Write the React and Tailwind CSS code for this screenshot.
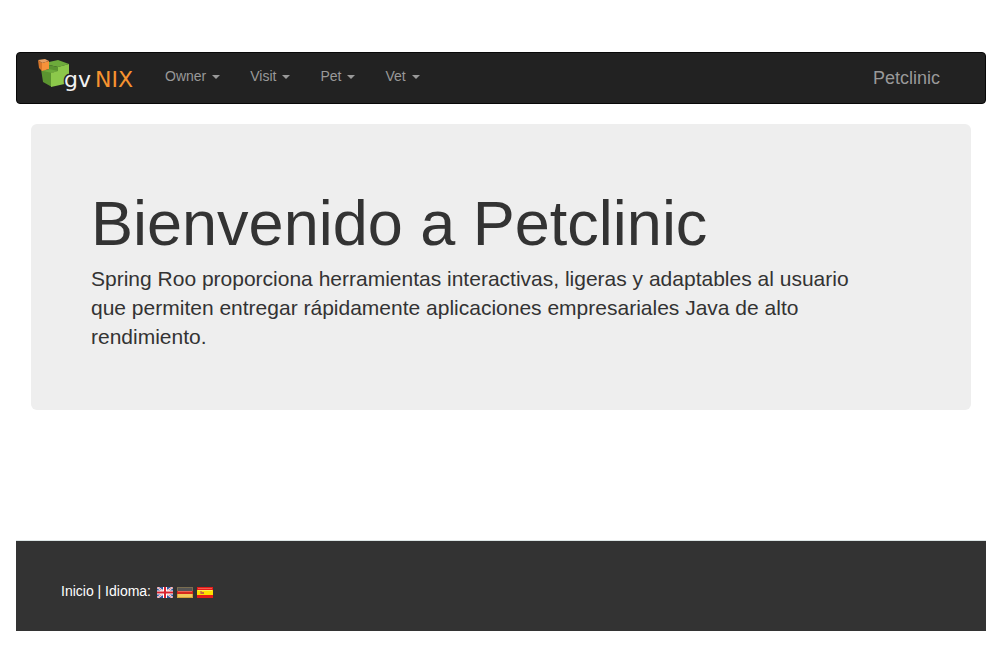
import React from "react";

const menus = ["Owner", "Visit", "Pet", "Vet"];

function Logo() {
  return (
    <svg width="100" height="34" viewBox="0 0 100 34" role="img" aria-label="gvNIX">
      <path d="M5 10 L16 12 V28 L7 23 Z" fill="#5b9430" />
      <path d="M13 3 L22 1 L33 5 L22 8 L13 6 Z" fill="#6dab3b" />
      <path d="M13 6 L22 8 V13 L13 11 Z" fill="#5b9430" />
      <path d="M7 12 L13 10 L22 12 L16 14 Z" fill="#6dab3b" />
      <path d="M15 14 L22 12 V8 L33 5 V24 L15 28 Z" fill="#8cc84b" />
      <path d="M2 1 L9 0 L13 2 L6 4 Z" fill="#e9a062" />
      <path d="M2 1 L6 4 V12 L3 9 Z" fill="#d9772a" />
      <path d="M6 4 L13 2 V10 L6 12 Z" fill="#f7923a" />
      <g fontFamily="'DejaVu Sans'" fontSize="22">
        <text x="28" y="28" fill="#f2f2f2" stroke="#222222" strokeWidth="3" paintOrder="stroke">gv</text>
        <text x="59" y="28" fill="#f7932f">NIX</text>
      </g>
    </svg>
  );
}

function UkFlag() {
  return (
    <svg width="16" height="11" viewBox="0 0 16 11" role="img" aria-label="English">
      <path d="M0 0H16V11H0Z" fill="#31549c" />
      <path d="M0 0L16 11M16 0L0 11" stroke="#fff" strokeWidth="2" />
      <path d="M0 0L16 11M16 0L0 11" stroke="#dc5962" strokeWidth="0.8" />
      <path d="M8 0V11M0 5.5H16" stroke="#fff" strokeWidth="4" />
      <path d="M8 0V11M0 5.5H16" stroke="#d8232f" strokeWidth="2" />
    </svg>
  );
}

function GermanFlag() {
  return (
    <svg width="16" height="11" viewBox="0 0 16 11" role="img" aria-label="Deutsch">
      <path d="M0 0H16V4H0Z" fill="#7a6d50" />
      <path d="M1 1H15V4H1Z" fill="#555555" />
      <path d="M0 4H16V7H0Z" fill="#d5291d" />
      <path d="M1 4H15V5H1Z" fill="#ed6354" />
      <path d="M0 7H16V11H0Z" fill="#d8a33a" />
      <path d="M1 7H15V10H1Z" fill="#f0c95c" />
    </svg>
  );
}

function SpanishFlag() {
  return (
    <svg width="16" height="11" viewBox="0 0 16 11" role="img" aria-label="Español">
      <path d="M0 0H16V11H0Z" fill="#e51b18" />
      <path d="M1 1H15V2H1Z" fill="#f35b4d" />
      <path d="M0 3H16V8H0Z" fill="#fedf00" />
      <path d="M1 3H15V4H1Z" fill="#ffed55" />
      <path d="M3 4H5V7H3Z" fill="#d88a3a" />
      <path d="M4 5H7V7H4Z" fill="#c96740" />
    </svg>
  );
}

export default function App() {
  return (
    <div className="mx-auto max-w-[1001px] bg-white pt-[52px] pr-[15px] pb-[15px] pl-4 font-['Liberation_Sans',Arial,sans-serif] text-sm text-[#333333]">
      <header>
        <nav className="flex min-h-[52px] items-center rounded border border-[#080808] bg-[#222222] pr-[45px] pl-[19px] text-[#999999]">
          <a href="#inicio" className="mb-1 mr-[14px] shrink-0">
            <Logo />
          </a>
          <ul className="flex flex-1">
            {menus.map((name) => (
              <li key={name}>
                <button type="button" className="flex items-center gap-1.5 px-[15px] pb-1 leading-5">
                  {name}
                  <svg width="8" height="4" viewBox="0 0 8 4" aria-hidden="true" className="mt-0.5">
                    <path d="M0 0H8L4 4Z" fill="currentColor" />
                  </svg>
                </button>
              </li>
            ))}
          </ul>
          <a href="#petclinic" className="text-lg leading-5">
            Petclinic
          </a>
        </nav>
      </header>

      <main className="mt-5 px-[15px]">
        <section className="rounded-md bg-[#eeeeee] px-[60px] pt-[66px] pb-[59px]">
          <h1 className="mb-2 text-[63px] leading-[66px]">Bienvenido a Petclinic</h1>
          <p className="max-w-[790px] text-[21px] leading-[29px]">
            Spring Roo proporciona herramientas interactivas, ligeras y adaptables al usuario que permiten
            entregar rápidamente aplicaciones empresariales Java de alto rendimiento.
          </p>
        </section>
      </main>

      <footer className="mt-[130px] flex items-center border-t border-[#dde5e5] bg-[#333333] px-[45px] pt-10 pb-[30px] leading-5 text-white">
        <a href="#inicio">Inicio</a>
        <span className="whitespace-pre"> | Idioma:</span>
        <span className="ml-1.5 mt-[3px] flex gap-1">
          <a href="#en"><UkFlag /></a>
          <a href="#de"><GermanFlag /></a>
          <a href="#es"><SpanishFlag /></a>
        </span>
      </footer>
    </div>
  );
}
